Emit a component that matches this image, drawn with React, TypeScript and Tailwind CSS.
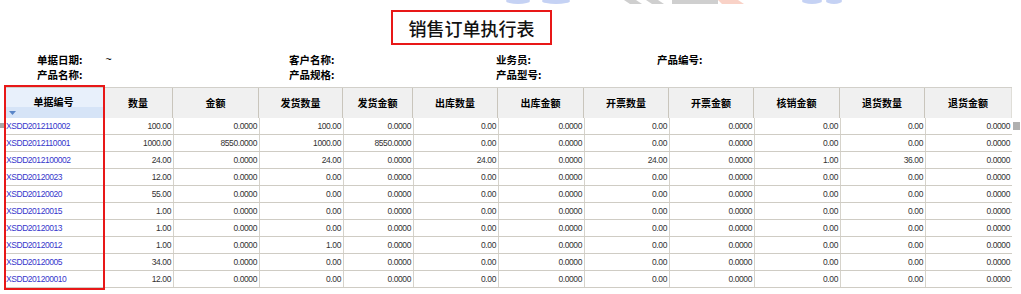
import React from 'react'

const cols = [
  '单据编号',
  '数量',
  '金额',
  '发货数量',
  '发货金额',
  '出库数量',
  '出库金额',
  '开票数量',
  '开票金额',
  '核销金额',
  '退货数量',
  '退货金额'
]

const zeros = ['0.0000', '0.00', '0.0000', '0.00', '0.0000', '0.00', '0.00', '0.0000']

const rows: string[][] = [
  ['XSDD2012110002', '100.00', '0.0000', '100.00', '0.0000', ...zeros.slice(1)],
  ['XSDD2012110001', '1000.00', '8550.0000', '1000.00', '8550.0000', ...zeros.slice(1)],
  ['XSDD2012100002', '24.00', '0.0000', '24.00', '0.0000', '24.00', '0.0000', '24.00', '0.0000', '1.00', '36.00', '0.0000'],
  ['XSDD20120023', '12.00', '0.0000', '0.00', ...zeros],
  ['XSDD20120020', '55.00', '0.0000', '0.00', ...zeros],
  ['XSDD20120015', '1.00', '0.0000', '0.00', ...zeros],
  ['XSDD20120013', '1.00', '0.0000', '0.00', ...zeros],
  ['XSDD20120012', '1.00', '0.0000', '1.00', ...zeros],
  ['XSDD20120005', '34.00', '0.0000', '0.00', ...zeros],
  ['XSDD201200010', '12.00', '0.0000', '0.00', ...zeros]
]

const grid =
  'grid grid-cols-[100px_69px_86px_84px_70px_85px_86px_85px_85px_86px_85px_87px] w-[1008px]'

function Watermark() {
  // faint pieces of a logo cut off by the top edge
  return (
    <svg className="absolute left-0 top-0" width="1021" height="8" viewBox="0 0 1021 8">
      <g opacity="0.35">
        <ellipse cx="518" cy="1" rx="12" ry="3" fill="#5b7fe0" />
        <ellipse cx="556" cy="1" rx="14" ry="3" fill="#5b7fe0" />
        <path d="M624 0 L636 0 L642 4 L630 4 Z" fill="#777" />
        <path d="M646 0 L658 0 L664 4 L652 4 Z" fill="#777" />
        <rect x="672" y="0" width="46" height="4" fill="#777" />
        <path d="M718 0 L738 0 L744 4 L722 4 Z" fill="#f08060" />
        <ellipse cx="812" cy="1" rx="10" ry="3" fill="#5b7fe0" />
        <ellipse cx="834" cy="1" rx="8" ry="3" fill="#5b7fe0" />
      </g>
    </svg>
  )
}

export default function App() {
  return (
    <div className="relative w-[1021px] h-[294px] overflow-hidden bg-white font-['Noto_Sans_CJK_SC',sans-serif] text-black">
      <Watermark />

      {/* Title */}
      <div className="pt-[10px] pl-[391px]">
        <div className="flex h-[35px] w-[161px] items-center justify-center border-2 border-[#e81818] text-[18px] font-medium leading-none text-[#111]">
          销售订单执行表
        </div>
      </div>

      {/* Filters */}
      <div className="mt-[7px] flex flex-col pl-[37px] text-[10.5px] font-bold leading-[15px]">
        <div className="flex">
          <div className="flex w-[252px]">
            <span>单据日期:</span>
            <span className="ml-[23px] font-normal font-['Liberation_Sans',sans-serif]">~</span>
          </div>
          <div className="w-[207px]">客户名称:</div>
          <div className="w-[161px]">业务员:</div>
          <div>产品编号:</div>
        </div>
        <div className="flex">
          <div className="w-[252px]">产品名称:</div>
          <div className="w-[207px]">产品规格:</div>
          <div>产品型号:</div>
        </div>
      </div>

      {/* Table */}
      <div className="relative mt-[5px] ml-[4px] w-[1008px]">
        <div className={`${grid} h-[31px] border-t border-[#d2d0ca] bg-[#f0f0f0]`}>
          {cols.map((c, i) =>
            i === 0 ? (
              <div key={c} className="flex flex-col border-r border-[#c9c5bc] bg-[#e8f0fb]">
                <div className="flex h-[19px] items-end justify-center text-[10px] font-bold leading-none">
                  {c}
                </div>
                <div className="mt-auto flex h-[11px] items-center bg-[#d6e4f7] pl-[5px]">
                  <svg width="7" height="4" viewBox="0 0 7 4">
                    <path d="M0 0 L7 0 L3.5 4 Z" fill="#5a86c8" />
                  </svg>
                </div>
              </div>
            ) : (
              <div
                key={c}
                className="flex items-center justify-center border-r border-[#c9c5bc] text-[10px] font-bold leading-none last:border-r-[#e0ded8]"
              >
                {c}
              </div>
            )
          )}
        </div>

        {rows.map((r, ri) => (
          <div
            key={ri}
            className={`${grid} h-[17px] border-b border-[#cfccc4] font-['Liberation_Sans',sans-serif] text-[8.5px] leading-none`}
          >
            {r.map((v, ci) =>
              ci === 0 ? (
                <div key={ci} className="flex items-center pl-[2px] tracking-[-0.45px] text-[#3636cc]">
                  {v}
                </div>
              ) : (
                <div
                  key={ci}
                  className="flex items-center justify-end border-l border-[#d6d3cb] pr-[2px] tracking-[-0.4px] text-[#333]"
                >
                  {v}
                </div>
              )
            )}
          </div>
        ))}

        {/* red highlight around the first column */}
        <div className="pointer-events-none absolute left-0 top-[-2px] h-[205px] w-[101px] border-2 border-[#e81818]" />
      </div>

      {/* small scroll markers at the edges */}
      <div className="absolute left-0 top-[123px] h-[5px] w-[4px] bg-[#a8a8a8]" />
      <div className="absolute left-[1013px] top-[122px] h-[8px] w-[7px] bg-[#b0b0b0]" />
    </div>
  )
}
